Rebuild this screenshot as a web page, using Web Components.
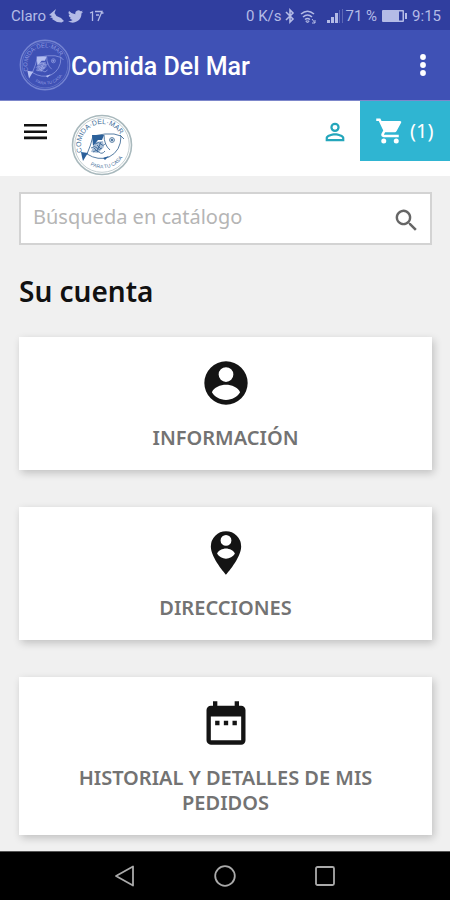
<!DOCTYPE html>
<html lang="es">
<head>
<meta charset="utf-8">
<meta name="viewport" content="width=device-width, initial-scale=1">
<title>Comida Del Mar</title>
<style>
  body { margin: 0; background: #f0f0f0; font-family: "Noto Sans", "Open Sans", sans-serif; }
</style>
</head>
<body>
<mar-app></mar-app>
<script>
const define = (name, html) => customElements.define(name, class extends HTMLElement {
  constructor() {
    super();
    const t = document.createElement('template');
    t.innerHTML = html;
    this.attachShadow({ mode: 'open' }).append(t.content.cloneNode(true));
  }
});

define('status-bar', `
<style>
  :host { display: flex; align-items: center; justify-content: space-between; height: 30px; padding: 2px 9px 0 11px;
    box-sizing: border-box; background: #303e9f; color: #b4bbe6; font: 15px/20px Roboto, sans-serif; white-space: nowrap; }
  div { display: flex; align-items: center; }
  svg { display: block; fill: currentColor; }
  .left { gap: 3px; } .left .bird { margin: 0 3px 0 1px; }
  .wifi { margin: 0 10px 0 5px; }
  .bt { margin-left: 4px; }
  .sig { margin-right: 2px; }
  .bat { margin: 0 5px; }
</style>
<div class="left"><span>Claro</span>
  <svg width="15" height="14" viewBox="0 0 15 14"><path d="M0 6 7 0 5.500 4 7.500 7 12 9 15 12 12.500 13.500 8 13 3 10 4 9 1 8.500 3 7Z"/></svg>
  <svg class="bird" width="15" height="13" viewBox="0 0 24 20"><path d="M24 2.400a10 10 0 0 1-2.800.8A5 5 0 0 0 23.300.5a10 10 0 0 1-3.100 1.200 4.900 4.900 0 0 0-8.400 4.500A14 14 0 0 1 1.700 1 4.900 4.900 0 0 0 3.200 7.600 5 5 0 0 1 1 7a4.900 4.900 0 0 0 4 4.900 5 5 0 0 1-2.200.1 4.900 4.900 0 0 0 4.600 3.400A10 10 0 0 1 0 17.500 14 14 0 0 0 21.500 5 10 10 0 0 0 24 2.400Z"/></svg>
  <svg width="15" height="12" viewBox="0 0 15 12" style="fill:none;stroke:currentColor;stroke-width:1.300"><path d="M1 3 3.500 2V11M6 1.500H13L9 11M7 5H10M12 3H14.500"/></svg>
</div>
<div class="right"><span>0 K/s</span>
  <svg class="bt" width="10" height="16" viewBox="0 0 10 16" style="fill:none;stroke:currentColor;stroke-width:1.600"><path d="M1 4 8 11 5 14V2L8 5 1 12"/></svg>
  <svg class="wifi" width="17" height="15" viewBox="0 0 17 15" style="fill:none;stroke:currentColor;stroke-width:1.600"><path d="M1 5Q7.500-.5 14 5M3 8Q7.500 4 12 8M5 10.500Q7.500 8.500 10 10.500"/><path d="M7.500 14 5.800 12H9.200ZM12 10 15 14M15 11V14H12" stroke-width="1"/></svg>
  <svg class="sig" width="16" height="14" viewBox="0 0 16 14"><path d="M0 11H3V14H0ZM4 8H7V14H4ZM8 4H11V14H8Z"/><path opacity=".35" d="M12 1H13V14H12ZM15 0H16V14H15Z"/></svg>
  <span>71 %</span>
  <svg class="bat" width="25" height="12" viewBox="0 0 25 12"><path fill-rule="evenodd" d="M1 0H21Q22 0 22 1V11Q22 12 21 12H1Q0 12 0 11V1Q0 0 1 0ZM17 1.500V10.500H20.500V1.500ZM23 3H25V9H23Z"/></svg>
  <span>9:15</span>
</div>`);

define('fish-seal', `
<style>
  :host { display: block; color: #a9b9bd; --ink: #456f9a; --fill: #2b609a; }
  svg { display: block; width: 100%; height: auto; }
  text { font: 7px "Liberation Sans", sans-serif; fill: var(--ink); }
  .small { font-size: 5px; }
</style>
<svg viewBox="0 0 62 62" fill="none" stroke="currentColor">
  <defs><path id="top" d="M11.200 38A21 21 0 1 1 50.800 38"/><path id="low" d="M17 49.500A24 24 0 0 0 53 41"/></defs>
  <circle cx="31" cy="31" r="29.500" stroke-width="1.600"/><circle cx="31" cy="31" r="27.300" stroke-width=".7"/>
  <g stroke="none"><text><textPath href="#top">COMIDA·DEL·MAR</textPath></text>
  <text class="small"><textPath href="#low" startOffset="3">PARA TU CASA</textPath></text></g>
  <g stroke="var(--ink)" stroke-width=".9">
    <path d="M16 40Q20 31 22 22L34 20Q44 19 50 22Q50 37 38 43Q27 47 16 40Z"/>
    <path d="M33 21Q33 31 39 36M20 34Q24 31 26 34T31 34M22 38Q25 35 28 38T34 37M24 30Q28 27 30 30T35 29"/>
    <circle cx="41" cy="26" r="2.400"/><circle cx="41" cy="26" r=".9" fill="var(--ink)"/>
    <path d="M49 21 53 25M26 31 30 35M23 34 27 38M30 28 26 37"/>
  </g>
  <g stroke="none" fill="var(--fill)"><path d="M21 21H33L31 26 27 26 22 32Z"/><path d="M10 38 17 39 15 42 12 47 11 43ZM32 44 38 42 34 46Z"/>
  <path opacity=".4" d="M24 28 32 27 33 33 27 39 20 38Z"/></g>
</svg>`);

define('app-bar', `
<style>
  :host { display: flex; align-items: center; height: 70px; padding: 0 18px 0 19px; box-sizing: border-box; background: #3f51b5; color: #fff; }
  fish-seal { width: 52px; color: #7584d2; --ink: #8f9be0; --fill: #b4bef0; }
  h1 { flex: 1; margin: 0; padding-top: 4px; font: 500 25px/32px Roboto, sans-serif; white-space: nowrap; }
  button { border: 0; background: none; padding: 0; width: 18px; height: 30px; color: inherit; }
  svg { display: block; margin: auto; }
</style>
<fish-seal></fish-seal><h1>Comida Del Mar</h1>
<button aria-label="Más opciones"><svg width="6" height="22" viewBox="0 0 6 22" fill="currentColor"><circle cx="3" cy="3" r="2.900"/><circle cx="3" cy="11" r="2.900"/><circle cx="3" cy="19" r="2.900"/></svg></button>`);

define('shop-header', `
<style>
  :host { display: flex; align-items: flex-start; height: 76px; border-top: 1px solid #7d87cb; box-sizing: border-box; background: #fff; }
  button { border: 0; background: none; padding: 0; color: #111; margin: 22px 23px 0 24px; }
  svg { display: block; fill: currentColor; }
  fish-seal { width: 62px; }
  .logo { margin-top: 13px; } .space { flex: 1; }
  .user { color: #24a6bb; margin: 17px 11px 0 0; }
  .cart { display: flex; align-items: center; gap: 5px; box-sizing: border-box; width: 90px; height: 60px; padding-left: 15px; background: #2fb5d2; color: #fff; text-decoration: none; font-size: 20px; line-height: 28px; white-space: nowrap; }
</style>
<button aria-label="Menú"><svg width="24" height="18" viewBox="0 0 24 18"><path d="M0 1H23V3.600H0ZM0 7.400H23V10H0ZM0 13.600H23V16.200H0Z"/></svg></button>
<a class="logo" href="#inicio" aria-label="Comida Del Mar"><fish-seal></fish-seal></a>
<span class="space"></span>
<a class="user" href="#cuenta" aria-label="Cuenta"><svg width="28" height="28" viewBox="0 0 24 24"><path d="M12 5.900a2.100 2.100 0 1 1 0 4.200 2.100 2.100 0 0 1 0-4.200m0 9c2.970 0 6.100 1.460 6.100 2.100v1.100H5.900V17c0-.64 3.130-2.100 6.100-2.100M12 4a4 4 0 1 0 0 8 4 4 0 0 0 0-8m0 9c-2.670 0-8 1.340-8 4v3h16v-3c0-2.660-5.330-4-8-4"/></svg></a>
<a class="cart" href="#carrito" aria-label="Carrito (1)"><svg width="30" height="30" viewBox="0 0 24 24"><path d="M7 18a2 2 0 1 0 0 4 2 2 0 0 0 0-4M1 2v2h2l3.600 7.590-1.350 2.450C4.520 15.370 5.480 17 7 17h12v-2H7.420c-.14 0-.25-.11-.25-.25L8.100 13h7.450c.75 0 1.410-.41 1.750-1.030l3.580-6.490A1 1 0 0 0 20 4H5.210l-.94-2zm16 16a2 2 0 1 0 0 4 2 2 0 0 0 0-4"/></svg><span>(1)</span></a>`);

define('search-box', `
<style>
  :host { display: block; }
  form { display: flex; align-items: center; height: 53px; box-sizing: border-box; border: 2px solid #d3d3d3; background: #fff; padding: 0 9px 0 12px; }
  input { flex: 1; min-width: 0; border: 0; padding: 0 0 4px; background: none; outline: 0; font: inherit; font-size: 20px; line-height: 30px; color: #333; }
  input::placeholder { color: #b5b5b5; opacity: 1; }
  button { border: 0; padding: 4px 0 0; background: none; color: #666; }
  svg { display: block; fill: currentColor; }
</style>
<form><input type="text" aria-label="Búsqueda en catálogo" placeholder="Búsqueda en catálogo">
<button type="button" aria-label="Buscar"><svg width="29" height="29" viewBox="0 0 24 24"><path d="M15.500 14h-.79l-.28-.27A6.500 6.500 0 1 0 13.730 14.430l.27.28v.79l5 4.990L20.490 19zm-6 0a4.500 4.500 0 1 1 0-9 4.500 4.500 0 0 1 0 9"/></svg></button></form>`);

define('account-card', `
<style>
  :host { display: block; background: #fff; box-shadow: 2px 3px 8px rgba(0,0,0,.2); }
  a { display: flex; flex-direction: column; align-items: center; gap: 16px; padding: 20px 40px; color: #737373; text-decoration: none; text-align: center; font-size: 20px; font-weight: 600; line-height: 25px; text-transform: uppercase; }
  ::slotted(svg) { display: block; width: 52px; height: 52px; fill: #141414; }
</style>
<a href="#detalle"><slot name="icon"></slot><span><slot></slot></span></a>`);

define('nav-bar', `
<style>
  :host { display: flex; justify-content: center; gap: 76px; align-items: center; height: 49px; background: #000; position: sticky; bottom: 0; border-top: 1px solid #555; box-sizing: border-box; }
  button { border: 0; padding: 0; background: none; width: 24px; height: 24px; }
  svg { display: block; fill: none; stroke: #aaa; stroke-width: 1.800; stroke-linejoin: round; }
</style>
<button aria-label="Atrás"><svg width="24" height="24"><path d="M3 12 20 2.500V21.500Z"/></svg></button>
<button aria-label="Inicio"><svg width="24" height="24"><circle cx="12" cy="12" r="9.800"/></svg></button>
<button aria-label="Recientes"><svg width="24" height="24"><rect x="3" y="3" width="18" height="18" rx="1.500"/></svg></button>`);

define('mar-app', `
<style>
  :host { display: flex; flex-direction: column; min-height: 100vh; }
  main { flex: 1; padding: 16px 18px 16px 19px; }
  h2 { margin: 26px 0; font-size: 28px; font-weight: 600; line-height: 40px; color: #111; }
  .cards { display: grid; gap: 37px; }
</style>
<status-bar></status-bar><app-bar></app-bar><shop-header></shop-header>
<main>
  <search-box></search-box>
  <h2>Su cuenta</h2>
  <div class="cards">
    <account-card><svg slot="icon" viewBox="0 0 24 24"><path fill-rule="evenodd" d="M12 2a10 10 0 1 0 0 20 10 10 0 0 0 0-20m0 2.700a3.400 3.400 0 1 1 0 6.800 3.400 3.400 0 0 1 0-6.800m0 15.100c-2.800 0-5.200-1.300-6.500-3.500C6.300 14 9.500 12.800 12 12.800s5.700 1.200 6.500 3.500c-1.300 2.200-3.700 3.500-6.500 3.500"/></svg>Información</account-card>
    <account-card><svg slot="icon" viewBox="0 0 24 24"><path fill-rule="evenodd" d="M12 2a7 7 0 0 0-7 7c0 5.250 7 13 7 13s7-7.750 7-13a7 7 0 0 0-7-7m0 1.700a2.500 2.500 0 1 1 0 5 2.500 2.500 0 0 1 0-5m0 10.900c-1.700 0-3.200-.7-4.100-2.200.2-1.500 2.600-2.500 4.100-2.500s3.900 1 4.100 2.500c-.9 1.500-2.400 2.200-4.100 2.200"/></svg>Direcciones</account-card>
    <account-card><svg slot="icon" viewBox="0 0 24 24"><path fill-rule="evenodd" d="M9 11H7v2h2zm4 0h-2v2h2zm4 0h-2v2h2zm2-7h-1V2h-2v2H8V2H6v2H5a2 2 0 0 0-2 2v14c0 1.100.9 2 2 2h14a2 2 0 0 0 2-2V6a2 2 0 0 0-2-2m0 16H5V9h14z"/></svg>Historial y detalles de mis pedidos</account-card>
  </div>
</main>
<nav-bar></nav-bar>
`);
</script>
</body>
</html>
